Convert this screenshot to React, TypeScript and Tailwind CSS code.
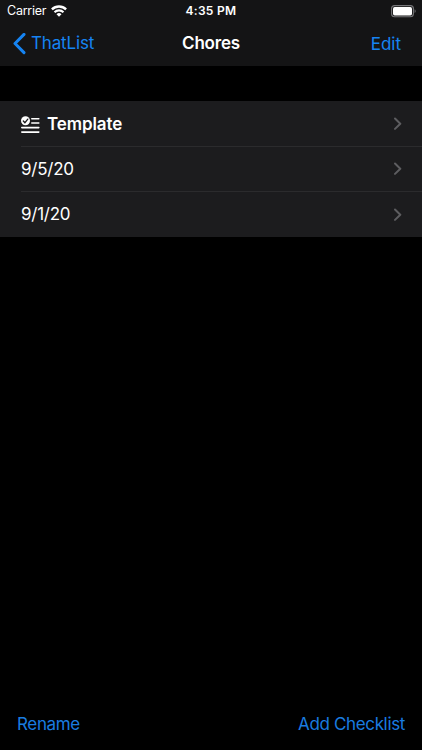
import React from 'react';

type RowProps = {
  title: string;
  isTemplate?: boolean;
  isLast?: boolean;
};

const rows: RowProps[] = [
  { title: 'Template', isTemplate: true },
  { title: '9/5/20' },
  { title: '9/1/20', isLast: true },
];

const WifiIcon = () => (
  <svg width="16" height="12" viewBox="0 0 16 12" fill="none" stroke="#fff">
    <path d="M.9 4.4a10.2 10.2 0 0 1 14.2 0" strokeWidth="2.4" />
    <path d="M3.5 7.2a6.5 6.5 0 0 1 9 0" strokeWidth="2.1" />
    <path d="M8 11.8 5.5 9.3a3.6 3.6 0 0 1 5 0Z" fill="#fff" stroke="none" />
  </svg>
);

const BatteryIcon = () => (
  <svg width="26" height="13" viewBox="0 0 26 13">
    <rect x="1.6" y="0.6" width="21.8" height="11.2" rx="3" fill="none" stroke="#77777a" strokeWidth="1.1" />
    <rect x="3" y="2" width="19" height="8.4" rx="1.7" fill="#fff" />
    <path d="M24.6 4.3c1.4.5 1.4 3.3 0 3.8Z" fill="#77777a" />
  </svg>
);

const TemplateIcon = () => (
  <svg width="19" height="18" viewBox="0 0 19 18">
    <path
      d="M10.8 2.7H17.8M10.8 7H17.8M.8 11.6H17.8M.8 16.1H17.8"
      stroke="#fff"
      strokeWidth="1.6"
      strokeLinecap="round"
    />
    <circle cx="4.5" cy="4.8" r="4.5" fill="#fff" />
    <path d="m2.3 5 1.6 1.7L6.8 3.1" fill="none" stroke="#1c1c1e" strokeWidth="1.3" strokeLinecap="round" />
  </svg>
);

const Chevron = () => (
  <svg width="8" height="14" viewBox="0 0 8 14" fill="none">
    <path d="m1 1.5 5.3 5.2L1 11.9" stroke="#5d5d60" strokeWidth="2" strokeLinecap="round" strokeLinejoin="round" />
  </svg>
);

const Row: React.FC<RowProps> = ({ title, isTemplate, isLast }) => (
  <li className={`flex pl-[21px] ${isTemplate ? 'h-[46px]' : 'h-[45px]'}`}>
    <button
      className={`flex flex-1 items-center pr-5 text-left ${isLast ? '' : 'border-b border-[#2b2b2d]'}`}
    >
      {isTemplate && (
        <span className="mr-[7px] block pt-[2px]">
          <TemplateIcon />
        </span>
      )}
      <span
        className={`flex-1 text-[17px] ${isTemplate ? 'pt-[3px] font-semibold tracking-[-0.1px]' : 'pt-px tracking-[-0.25px]'}`}
      >
        {title}
      </span>
      <Chevron />
    </button>
  </li>
);

export default function App() {
  return (
    <div className="flex h-[750px] w-[422px] flex-col bg-black font-[Inter,sans-serif] text-white">
      <header className="h-[66px] bg-[#141415]">
        <div className="grid h-[22px] grid-cols-3 items-center px-[6px]">
          <div className="flex items-center gap-[5px] pl-px text-[12.5px] tracking-[-0.25px]">
            <span>Carrier</span>
            <WifiIcon />
          </div>
          <span className="text-center text-xs font-semibold tracking-[0.3px]">4:35 PM</span>
          <span className="justify-self-end">
            <BatteryIcon />
          </span>
        </div>
        <nav className="grid h-[43px] grid-cols-3 items-center px-[13px] text-[17px] text-[#1684f2]">
          <button className="flex items-center gap-[5px] tracking-[-0.15px]">
            <svg width="13" height="22" viewBox="0 0 13 22" fill="none">
              <path d="M11 1.4 2 10.5l9 9.1" stroke="#1684f2" strokeWidth="3" strokeLinecap="round" strokeLinejoin="round" />
            </svg>
            ThatList
          </button>
          <h1 className="text-center font-semibold tracking-[-0.2px] text-white">Chores</h1>
          <button className="justify-self-end pt-[2px] pr-2">Edit</button>
        </nav>
      </header>

      <main className="flex-1 pt-[35px]">
        <ul className="bg-[#1c1c1e]">
          {rows.map((row) => (
            <Row key={row.title} {...row} />
          ))}
        </ul>
      </main>

      <footer className="flex h-[54px] items-center justify-between px-[17px] pt-[3px] text-[17px] text-[#1a7ce0]">
        <button className="tracking-[-0.35px]">Rename</button>
        <button className="tracking-[-0.35px]">Add Checklist</button>
      </footer>
    </div>
  );
}
